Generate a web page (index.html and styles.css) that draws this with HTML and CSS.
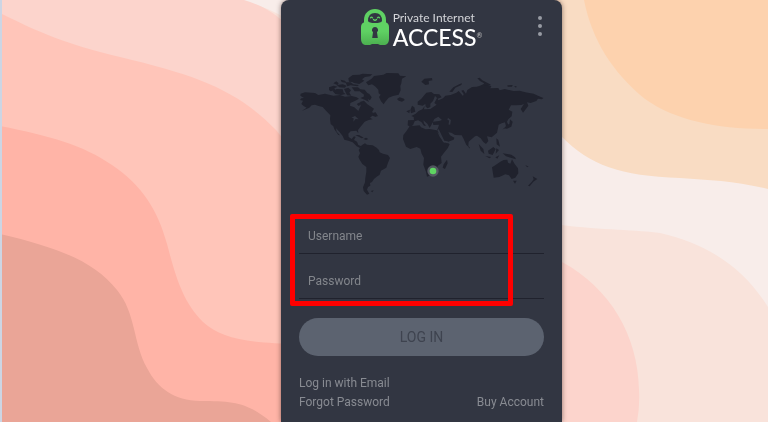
FILE: index.html
```
<!DOCTYPE html>
<html lang="en">
<head>
<meta charset="utf-8">
<meta name="viewport" content="width=device-width, initial-scale=1">
<title>Private Internet Access</title>
<link rel="stylesheet" href="styles.css">
</head>
<body>
<svg class="wallpaper" viewBox="0 0 768 422" preserveAspectRatio="none" aria-hidden="true">
  <rect width="768" height="422" fill="#f8edea"/>
  <path fill="#f9e3db" d="M240 0C270 8 300 20 330 60L500 225L562 225C600 230 640 230 660 233C710 244 745 270 768 307V422H240Z"/>
  <path fill="#fcd4cc" d="M0 0H244C270 8 290 20 310 60L562 262C610 288 638 335 639 390Q640 405 637 422H0Z"/>
  <path fill="#f9dcc3" d="M550 0H768V189C735 181 710 180 680 178C620 176 590 165 562 137Z"/>
  <path fill="#fdd2ae" d="M584 0C592 40 612 72 645 99C676 121 718 129 768 129V0Z"/>
  <path fill="#ffc5b9" d="M0 13C50 38 75 46 120 57C200 76 238 91 276 130L300 160V422H0Z"/>
  <path fill="#ffb4a7" d="M0 126C50 136 83 145 112 165C143 186 158 211 167 244C176 278 183 302 203 322C222 339 247 343 300 344V422H0Z"/>
  <path fill="#eaa597" d="M0 234C60 248 95 262 117 290C136 313 133 343 147 368C158 389 174 400 200 401C235 401 248 403 271 422H0Z"/>
  <rect width="2" height="422" fill="#ccd5e4"/>
</svg>
<div class="screen">
  <main class="panel">
    <header class="header">
      <div class="brand">
        <svg class="lock" viewBox="0 0 28 37" aria-hidden="true">
          <defs><linearGradient id="body" x1="0" y1="0" x2="0" y2="1"><stop offset=".4" stop-color="#5fd163"/><stop offset="1" stop-color="#4caf50"/></linearGradient></defs>
          <path fill="#5fd163" d="M3 17V11C3 4 8 0 14 0S25 4 25 11V17Z"/>
          <path fill="url(#body)" d="M4 13H24Q28 14 28 18V30Q28 35 24 36H19L17 35H11L9 36H4Q0 35 0 30V18Q0 14 4 13Z"/>
          <path fill="#323642" d="M7 12Q7 4 14 4T21 12Q20 14 14 14T7 12Z"/>
          <path fill="none" stroke="#5fd163" stroke-width="1.3" stroke-linecap="round" d="M9.5 8.8Q10.5 7.3 11.5 8.8M16.5 8.8Q17.5 7.3 18.5 8.8M12.5 10.5Q14 12 15.5 10.5"/>
          <path fill="#323642" d="M14 18A3 3 0 0 1 16 23.3L16.8 29H11.2L12 23.3A3 3 0 0 1 14 18Z"/>
        </svg>
        <div class="wordmark"><span class="name">Private Internet</span><span class="access">ACCESS<sup>®</sup></span></div>
      </div>
      <button class="menu" type="button" aria-label="Menu"><i></i><i></i><i></i></button>
    </header>
    <svg class="map" viewBox="27 36 735 372" role="img" aria-label="World map">
      <g fill="#20222d">
        <path d="M32 101L45 97L75 99L85 105L105 101L130 107L150 105L165 110L185 108L200 112L207 116L196 122L181 129L180 137L193 142L205 153L208 146L212 138L211 125L222 122L232 133L240 138L252 146L246 156L261 167L258 171L247 167L240 173L248 178L236 180L224 185L218 193L211 201L204 210L205 220L199 212L182 214L175 221L176 231L185 237L192 229L197 231L192 240L201 245L205 255L214 259L210 264L200 259L188 247L175 242L163 239L158 228L148 215L138 205L140 215L150 226L145 225L133 208L130 199L122 192L120 177L121 166L108 152L98 141L86 138L75 134L65 136L58 143L35 153L50 143L42 139L34 132L39 122L30 120L34 115L42 114L31 107Z"/>
        <path d="M184 173L195 168L201 173L206 178L197 177L190 185L191 175Z" fill="#323642"/>
        <path d="M228 67L244 57L252 48L280 44L290 39L325 40L330 47L349 49L336 56L334 70L331 78L332 91L326 104L309 108L296 113L286 125L281 133L273 124L267 111L272 104L266 100L265 89L255 79L246 73L235 76Z"/>
        <path d="M175 55L188 45L208 44L218 41L247 43L240 49L225 51L216 58L223 62L208 72L192 69L187 66L177 65ZM166 66L182 67L190 73L207 75L202 79L182 76L172 79ZM152 59L165 62L170 69L155 66ZM130 70L139 64L146 70L142 75ZM117 82L131 77L143 80L133 85L136 90L122 94L117 90ZM140 75L158 73L170 77L164 83L148 82ZM128 93L140 87L158 88L161 98L167 102L153 105L136 102ZM162 87L175 83L183 91L178 98L184 107L171 106ZM185 82L204 82L211 88L224 89L232 99L238 102L245 112L240 121L233 117L237 126L224 119L211 114L221 110L222 104L209 94L194 94ZM200 132L212 126L216 131L206 138ZM250 158L257 157L264 169L252 167ZM321 117L329 112L342 116L344 120L336 125L326 122ZM196 225L207 225L221 233L215 235L206 230ZM220 237L228 233L235 237L228 240Z"/>
        <path d="M206 270L215 256L225 250L231 254L248 256L260 263L267 270L269 277L279 281L294 285L300 294L294 308L289 323L281 328L273 332L269 344L260 350L252 357L246 366L240 369L241 377L234 381L231 389L238 401L231 404L221 393L219 382L225 367L226 353L229 335L229 321L217 312L208 298L205 290L210 280ZM242 393L251 391L247 397Z"/>
        <path d="M339 237L340 225L349 214L359 199L375 197L389 196L393 202L407 208L419 207L440 211L449 230L462 248L474 249L479 253L473 265L461 280L453 290L455 309L443 318L442 329L431 343L411 350L408 335L400 314L402 294L395 281L391 266L380 261L361 267L348 260Z"/>
        <path d="M353 196L354 181L372 180L371 171L364 168L377 161L386 153L397 148L404 138L402 148L421 147L433 139L440 134L433 129L441 114L435 108L429 123L421 131L421 141L413 145L407 140L406 132L398 137L383 134L383 125L394 116L409 98L424 96L432 102L448 103L455 112L443 116L445 121L459 115L466 107L482 105L499 98L506 93L519 108L521 102L514 92L520 90L528 101L532 90L546 81L560 80L570 77L581 72L594 75L604 78L601 85L625 84L629 91L644 87L671 93L689 92L706 97L731 101L744 107L760 114L756 118L744 116L739 123L722 129L711 127L715 137L705 151L699 158L692 147L702 132L694 135L678 136L663 136L656 149L667 155L665 169L655 178L651 185L657 200L649 203L645 187L635 190L626 194L624 205L621 218L605 232L591 229L595 243L588 252L580 246L572 235L561 227L555 229L536 245L535 257L540 264L529 255L521 237L515 226L495 225L484 218L475 217L480 226L493 233L491 239L465 249L456 231L440 213L444 204L447 194L430 195L428 185L447 183L456 180L445 170L433 177L426 191L419 204L412 191L400 181L402 190L408 197L402 197L394 186L384 181L374 184L369 196L360 200Z"/>
        <path d="M361 150L366 137L373 142L376 155L363 160ZM349 154L360 149L358 160ZM394 65L403 56L426 54L427 61L416 63L417 73L406 75ZM478 95L490 82L509 72L516 70L514 75L496 83L487 96ZM562 55L569 53L577 61L593 69L603 74L585 78L581 69L570 63ZM652 76L668 75L666 80L653 80ZM672 78L680 79L678 83Z"/>
        <path d="M638 209L650 196L658 192L660 178L668 185L664 200L651 206L640 205ZM619 235L625 240L630 260L620 253ZM566 252L580 267L583 282L572 272ZM586 288L604 291L598 295ZM594 272L610 261L617 267L608 285L596 281ZM619 265L627 270L617 281ZM638 280L652 282L664 284L675 292L678 298L662 293L648 289ZM616 292L628 286L622 296ZM537 260L540 265L536 264Z"/>
        <path d="M606 322L618 314L631 305L641 300L652 299L654 308L661 311L666 298L674 312L684 325L685 340L676 353L665 357L657 346L646 343L628 351L611 353ZM669 362L680 362L675 371ZM728 349L742 357L730 365L719 379L714 377L725 366L731 358ZM706 315L716 320L711 322ZM461 313L471 299L473 310L465 327L458 323Z"/>
      </g>
      <path fill="none" stroke="#323642" stroke-width="5" d="M444 209L461 244L474 247M473 176L480 181L478 194"/>
      <circle cx="429" cy="333" r="17" fill="#656b73" opacity=".7"/>
      <circle cx="429" cy="333" r="10" fill="#5fd562"/>
    </svg>
    <form class="login">
      <div class="fields">
        <input type="text" placeholder="Username" aria-label="Username">
        <input type="password" placeholder="Password" aria-label="Password">
        <div class="highlight"></div>
      </div>
      <button class="submit" type="submit">LOG IN</button>
    </form>
    <nav class="links">
      <a href="#">Log in with Email</a>
      <div class="row"><a href="#">Forgot Password</a><a href="#">Buy Account</a></div>
    </nav>
  </main>
</div>
</body>
</html>
```
FILE: styles.css
```
* { box-sizing: border-box; }
body {
  margin: 0;
  font-family: Roboto, "Liberation Sans", sans-serif;
  background: #f8edea;
}
.wallpaper {
  position: fixed;
  inset: 0;
  width: 100%;
  height: 100%;
}
.screen {
  position: relative;
  display: grid;
  grid-template-columns: 281fr 281fr 206fr;
  min-height: 100vh;
}
.panel {
  grid-column: 2;
  padding: 0 18px;
  background: #323642;
  border-radius: 8px 8px 0 0;
  box-shadow: 0 0 5px rgba(70, 45, 40, 0.6);
}
.header {
  display: grid;
  grid-template-columns: 1fr auto 1fr;
  padding-top: 9px;
  height: 72px;
}
.brand {
  grid-column: 2;
  display: flex;
  gap: 4px;
  align-items: flex-start;
}
.lock { width: 28px; height: 37px; }
.wordmark {
  display: flex;
  flex-direction: column;
  padding-top: 2px;
  font-family: Lato, "Noto Sans", sans-serif;
  white-space: nowrap;
}
.name { font-size: 12px; line-height: 14px; color: #d4d5d9; }
.access { font-size: 23px; line-height: 24px; font-weight: 500; color: #fff; }
.access sup { font-size: 7px; line-height: 0; vertical-align: 8px; color: #bbb; }
.menu {
  justify-self: end;
  align-self: start;
  display: flex;
  flex-direction: column;
  gap: 4px;
  padding: 7px 2px;
  border: 0;
  background: none;
}
.menu i {
  width: 4px;
  height: 4px;
  border-radius: 50%;
  background: #989ba3;
}
.map { display: block; width: 100%; }
.login { padding-top: 13px; }
.fields { position: relative; }
.fields input {
  display: block;
  width: 100%;
  height: 36px;
  margin-top: 9px;
  padding: 0 9px;
  border: 0;
  border-bottom: 1px solid #20222d;
  border-radius: 0;
  background: none;
  color: #d4d5d9;
  font: 12px Roboto, sans-serif;
}
.fields input::placeholder { color: #83868c; opacity: 1; }
.highlight {
  position: absolute;
  inset: -4px 31px -7px -9px;
  border: 5px solid #ff0000;
  border-radius: 2px;
  pointer-events: none;
}
.submit {
  display: block;
  width: 100%;
  height: 38px;
  margin-top: 19px;
  border: 0;
  border-radius: 19px;
  background: #5c6370;
  color: #3e434f;
  font: 14px Roboto, sans-serif;
}
.links {
  padding-top: 18px;
  font-size: 12px;
  line-height: 19px;
}
.links a { display: block; color: #888b92; text-decoration: none; }
.row { display: flex; justify-content: space-between; }
```
